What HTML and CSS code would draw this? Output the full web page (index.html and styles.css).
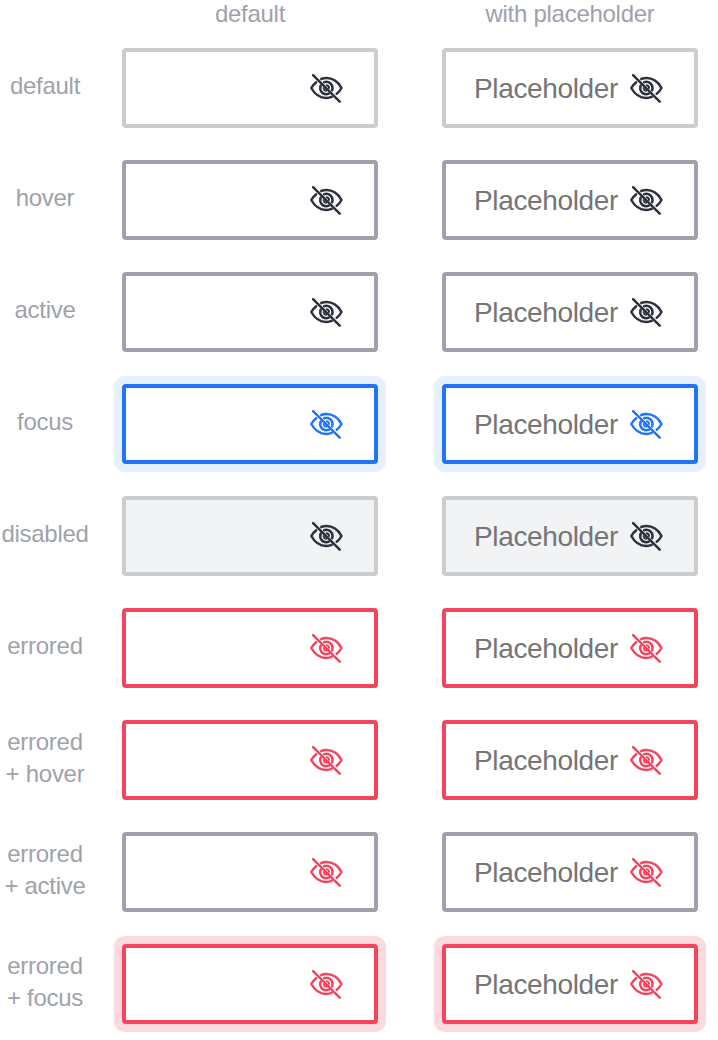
FILE: index.html
```
<!DOCTYPE html>
<html lang="en">
<head>
<meta charset="utf-8">
<title>Password input states</title>
<link rel="stylesheet" href="styles.css">
</head>
<body>
<svg class="defs" width="0" height="0" aria-hidden="true">
  <defs>
    <symbol id="eye-off" viewBox="0 0 40 40">
      <g fill="none" stroke="currentColor" stroke-width="2.5" stroke-linecap="round" stroke-linejoin="round">
        <path d="M10.2 14.2C8.2 15.8 6.5 17.8 5.3 20C8.8 26.4 14.2 29.9 20.3 29.9C22.2 29.9 24 29.6 25.7 28.9"/>
        <path d="M15.3 11C16.9 10.4 18.6 10.1 20.3 10.1C26.4 10.1 32 13.6 35.5 20C34.2 22.3 32.6 24.3 30.7 25.8"/>
        <path d="M14.7 17.5C13.1 21.8 16 26.2 20.3 26.2C21.2 26.2 22 26 22.8 25.7"/>
        <path d="M18.2 14.2C22.6 12.8 26.5 16.1 26.5 20C26.5 20.8 26.3 21.6 26.1 22.3"/>
        <path d="M20.7 17.3C22 17.5 23 18.6 23 20M17.6 20.2C17.8 21.5 18.8 22.5 20.1 22.7" stroke-width="2"/>
        <path d="M7.1 7.2L33.7 33.7"/>
      </g>
    </symbol>
  </defs>
</svg>
<main class="states">
  <div class="heading"></div><div class="heading">default</div><div class="heading">with placeholder</div>
  <div class="label">default</div>
  <div class="field"><span class="text"></span><svg class="icon"><use href="#eye-off"/></svg></div>
  <div class="field"><span class="text">Placeholder</span><svg class="icon"><use href="#eye-off"/></svg></div>
  <div class="label">hover</div>
  <div class="field hover"><span class="text"></span><svg class="icon"><use href="#eye-off"/></svg></div>
  <div class="field hover"><span class="text">Placeholder</span><svg class="icon"><use href="#eye-off"/></svg></div>
  <div class="label">active</div>
  <div class="field active"><span class="text"></span><svg class="icon"><use href="#eye-off"/></svg></div>
  <div class="field active"><span class="text">Placeholder</span><svg class="icon"><use href="#eye-off"/></svg></div>
  <div class="label">focus</div>
  <div class="field focus"><span class="text"></span><svg class="icon"><use href="#eye-off"/></svg></div>
  <div class="field focus"><span class="text">Placeholder</span><svg class="icon"><use href="#eye-off"/></svg></div>
  <div class="label">disabled</div>
  <div class="field disabled"><span class="text"></span><svg class="icon"><use href="#eye-off"/></svg></div>
  <div class="field disabled"><span class="text">Placeholder</span><svg class="icon"><use href="#eye-off"/></svg></div>
  <div class="label">errored</div>
  <div class="field errored"><span class="text"></span><svg class="icon"><use href="#eye-off"/></svg></div>
  <div class="field errored"><span class="text">Placeholder</span><svg class="icon"><use href="#eye-off"/></svg></div>
  <div class="label">errored<br>+ hover</div>
  <div class="field errored"><span class="text"></span><svg class="icon"><use href="#eye-off"/></svg></div>
  <div class="field errored"><span class="text">Placeholder</span><svg class="icon"><use href="#eye-off"/></svg></div>
  <div class="label">errored<br>+ active</div>
  <div class="field errored active"><span class="text"></span><svg class="icon"><use href="#eye-off"/></svg></div>
  <div class="field errored active"><span class="text">Placeholder</span><svg class="icon"><use href="#eye-off"/></svg></div>
  <div class="label">errored<br>+ focus</div>
  <div class="field errored focus"><span class="text"></span><svg class="icon"><use href="#eye-off"/></svg></div>
  <div class="field errored focus"><span class="text">Placeholder</span><svg class="icon"><use href="#eye-off"/></svg></div>
</main>
</body>
</html>
```
FILE: styles.css
```
* {
  box-sizing: border-box;
}

body {
  margin: 0;
  background: #fff;
  font-family: "Liberation Sans", Arial, sans-serif;
}

.defs {
  display: block;
}

.states {
  display: grid;
  grid-template-columns: 90px 256px 256px;
  grid-template-rows: 48px repeat(9, 112px);
  column-gap: 32px;
  height: 1040px;
  overflow: hidden;
}

.states > :nth-child(3n) {
  margin-left: 32px;
  margin-right: -32px;
}

.heading,
.label {
  color: #9fa2ab;
  font-size: 24px;
  line-height: 32px;
  letter-spacing: -0.27px;
  text-align: center;
  white-space: nowrap;
}

.heading {
  margin-top: -2px;
}

.label {
  display: flex;
  flex-direction: column;
  justify-content: center;
  height: 76px;
}

.field {
  display: flex;
  align-items: center;
  height: 80px;
  padding: 0 28px;
  border: 4px solid #c9cdd0;
  border-radius: 4px;
  background: #fff;
  color: #2b303b;
}

.text {
  flex: 1;
  padding-top: 2px;
  color: #757575;
  font-size: 28px;
  line-height: 36px;
  letter-spacing: -0.36px;
}

.icon {
  flex: none;
  width: 40px;
  height: 40px;
}

.hover,
.active {
  border-color: #9fa2ab;
}

.focus {
  border-color: #1f75f6;
  box-shadow: 0 0 0 8px #e7f1fe;
  color: #1f75f6;
}

.disabled {
  background: #f1f3f5;
}

.errored {
  border-color: #f5455c;
  color: #f5455c;
}

.errored.active {
  border-color: #9fa2ab;
}

.errored.focus {
  box-shadow: 0 0 0 8px #fddade;
}
```
